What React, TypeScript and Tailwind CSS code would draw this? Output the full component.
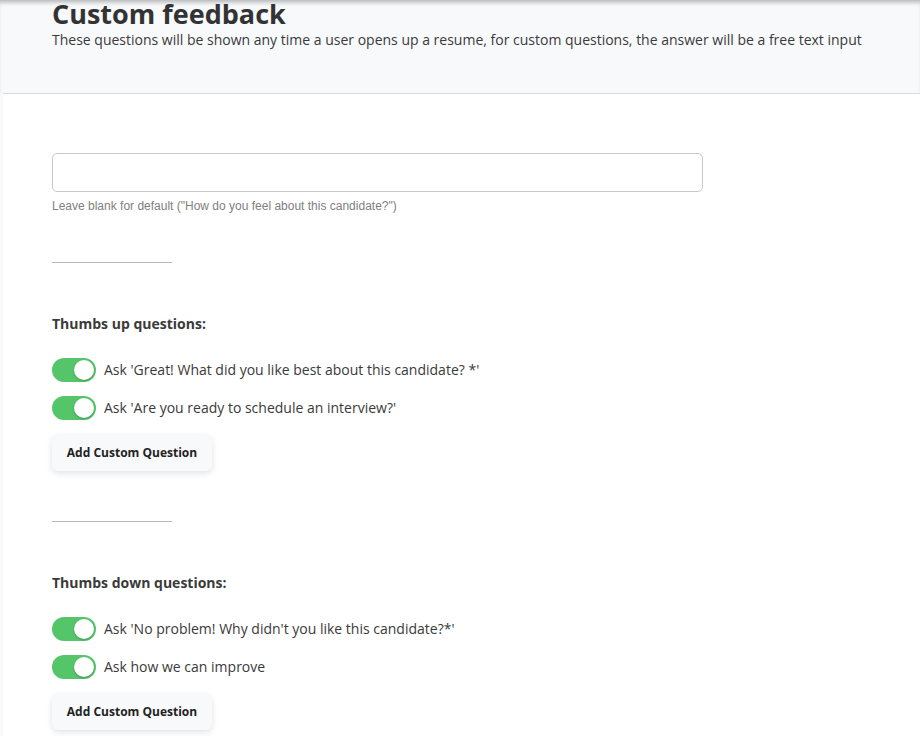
import { useState } from "react";

const font = { fontFamily: '"Open Sans", "Noto Sans", sans-serif' };

function Toggle({ on, onChange }: { on: boolean; onChange: () => void }) {
  return (
    <button
      onClick={onChange}
      className={`relative w-[44px] h-[24px] rounded-full shrink-0 transition-colors ${on ? "bg-[#55c56a]" : "bg-[#d5d7db]"}`}
    >
      <span
        className={`absolute top-[2px] w-[20px] h-[20px] rounded-full bg-white shadow-[0_1px_2px_rgba(0,0,0,0.25)] transition-all ${on ? "left-[22px]" : "left-[2px]"}`}
      />
    </button>
  );
}

function QuestionGroup({ title, questions }: { title: string; questions: string[] }) {
  const [state, setState] = useState(questions.map(() => true));
  return (
    <div>
      <div className="w-[120px] h-px bg-[#b5b5b5]" />
      <h3 className="mt-[52px] text-[14px] leading-[18px] font-bold text-[#3a3a3a]">{title}</h3>
      <div className="mt-[25px] flex flex-col gap-[14px]">
        {questions.map((q, i) => (
          <div key={q} className="flex items-center gap-[8px]">
            <Toggle on={state[i]} onChange={() => setState(state.map((s, j) => (j === i ? !s : s)))} />
            <span className="text-[14px] leading-[18px] text-[#3a3a3a]">{q}</span>
          </div>
        ))}
      </div>
      <button className="mt-[15px] h-[36px] w-[160px] rounded-[6px] bg-[#f8f9fa] text-[12px] font-bold text-[#222] shadow-[0_2px_6px_rgba(0,0,0,0.12)]">
        Add Custom Question
      </button>
    </div>
  );
}

export default function App() {
  return (
    <div className="min-h-screen w-[920px] h-[736px] overflow-hidden bg-[#f8f9fb] flex flex-col" style={font}>
      <div className="shadow-[inset_0_5px_5px_-3px_rgba(0,0,0,0.3)] pl-[3px]">
        <div className="h-[94px] border-b border-[#dcdcdc] pl-[49px]">
          <h1 className="text-[27px] leading-[28px] font-bold text-[#333]">Custom feedback</h1>
          <p className="mt-[3px] text-[14px] leading-[18px] text-[#3a3a3a]">
            These questions will be shown any time a user opens up a resume, for custom questions, the answer will be a free text input
          </p>
        </div>
      </div>
      <div className="ml-[3px] flex-1 bg-white pl-[49px] pt-[59px]">
        <input
          className="block w-[651px] h-[39px] rounded-[5px] border border-[#c8c8c8] px-3 text-[13px] outline-none"
        />
        <p className="mt-[7px] text-[12px] leading-[14px] text-[#808080]" style={{ fontFamily: '"Liberation Sans", Arial, sans-serif' }}>
          Leave blank for default ("How do you feel about this candidate?")
        </p>
        <div className="mt-[49px] flex flex-col gap-[50px]">
          <QuestionGroup
            title="Thumbs up questions:"
            questions={["Ask 'Great! What did you like best about this candidate? *'", "Ask 'Are you ready to schedule an interview?'"]}
          />
          <QuestionGroup
            title="Thumbs down questions:"
            questions={["Ask 'No problem! Why didn't you like this candidate?*'", "Ask how we can improve"]}
          />
        </div>
      </div>
    </div>
  );
}
